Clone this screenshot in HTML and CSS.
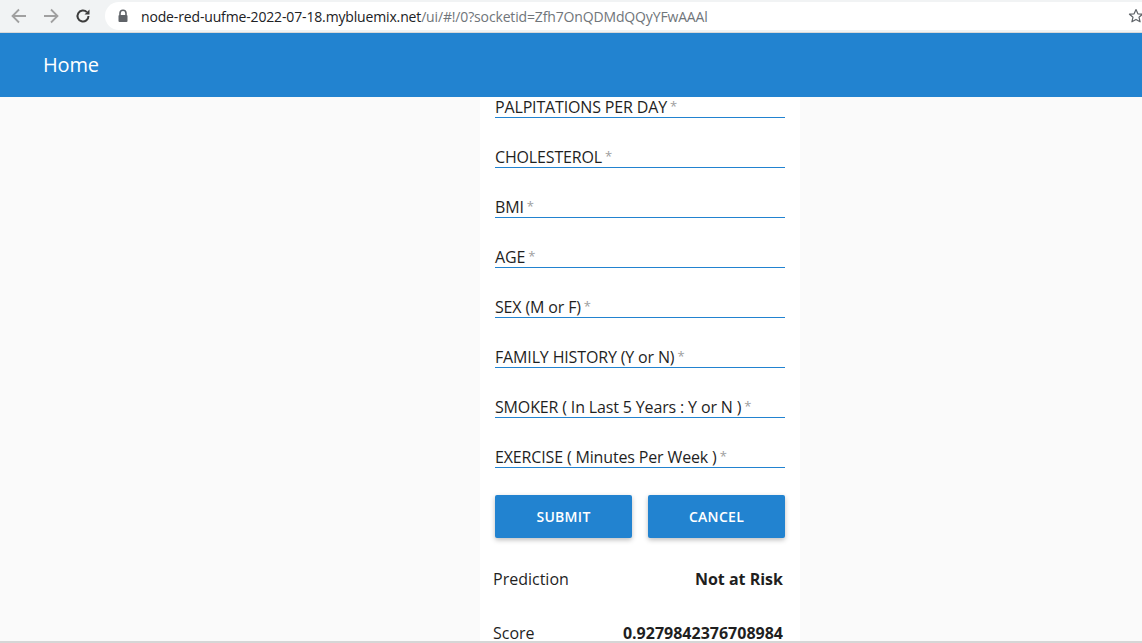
FILE: index.html
```html
<!DOCTYPE html>
<html>
<head>
<meta charset="utf-8">
<link rel="stylesheet" href="styles.css">
</head>
<body>
<div class="chrome">
  <div class="nav">
    <svg class="ico" width="20" height="20" viewBox="0 0 20 20"><path d="M17 10H4M10 3.5L3.5 10l6.5 6.5" fill="none" stroke="#a0a0a0" stroke-width="1.8"/></svg>
    <svg class="ico" width="20" height="20" viewBox="0 0 20 20"><path d="M3 10h13M10 3.5l6.5 6.5-6.5 6.5" fill="none" stroke="#a0a0a0" stroke-width="1.8"/></svg>
    <svg class="ico" width="20" height="20" viewBox="0 0 20 20"><path d="M15.5 10a5.5 5.5 0 1 1-1.6-3.9" fill="none" stroke="#3c3c3c" stroke-width="2"/><path d="M16.5 3.5v5h-5z" fill="#3c3c3c"/></svg>
  </div>
  <div class="omnibox">
    <svg class="lock" width="12" height="14" viewBox="0 0 12 14"><path d="M3 6V4.2a3 3 0 0 1 6 0V6" fill="none" stroke="#5f6368" stroke-width="1.6"/><rect x="1.5" y="6" width="9" height="7" rx="1" fill="#5f6368"/></svg>
    <span class="host">node-red-uufme-2022-07-18.mybluemix.net</span><span class="path">/ui/#!/0?socketid=Zfh7OnQDMdQQyYFwAAAl</span>
    <svg class="star" width="16" height="16" viewBox="0 0 16 16"><path d="M8 1.5l1.9 4.3 4.6.4-3.5 3 1.1 4.6L8 11.4l-4.1 2.4 1.1-4.6-3.5-3 4.6-.4z" fill="none" stroke="#5f6368" stroke-width="1.2" stroke-linejoin="round"/></svg>
  </div>
</div>
<header class="topbar"><span class="title">Home</span></header>
<main class="main">
  <section class="card">
    <div class="field first"><span class="label">PALPITATIONS PER DAY<span class="req">*</span></span></div>
    <div class="field"><span class="label">CHOLESTEROL<span class="req">*</span></span></div>
    <div class="field"><span class="label">BMI<span class="req">*</span></span></div>
    <div class="field"><span class="label">AGE<span class="req">*</span></span></div>
    <div class="field"><span class="label">SEX (M or F)<span class="req">*</span></span></div>
    <div class="field"><span class="label">FAMILY HISTORY (Y or N)<span class="req">*</span></span></div>
    <div class="field"><span class="label">SMOKER ( In Last 5 Years : Y or N )<span class="req">*</span></span></div>
    <div class="field"><span class="label">EXERCISE ( Minutes Per Week )<span class="req">*</span></span></div>
    <div class="buttons">
      <button class="btn">SUBMIT</button>
      <button class="btn">CANCEL</button>
    </div>
    <div class="row pred"><span>Prediction</span><span class="val">Not at Risk</span></div>
    <div class="row"><span>Score</span><span class="val">0.9279842376708984</span></div>
  </section>
</main>
</body>
</html>
```
FILE: styles.css
```css
html, body {
  margin: 0;
  padding: 0;
  height: 643px;
  overflow: hidden;
}
body {
  font-family: "Open Sans", "Noto Sans", sans-serif;
  background: #fafafa;
  display: flex;
  flex-direction: column;
  border-bottom: 2px solid #d6d6d6;
  box-sizing: border-box;
}
.chrome {
  height: 32px;
  flex: none;
  background: #f1f3f4;
  border-bottom: 1px solid #d9d9d9;
  display: flex;
  align-items: center;
}
.nav {
  display: flex;
  gap: 12px;
  padding-left: 9px;
  width: 96px;
  flex: none;
}
.ico { display: block; }
.omnibox {
  flex: 1;
  height: 28px;
  background: #fff;
  border-radius: 14px 0 0 14px;
  display: flex;
  align-items: center;
  padding-left: 12px;
  font-size: 14px;
  letter-spacing: -0.15px;
}
.lock { margin-right: 12px; }
.host { color: #202124; }
.path { color: #70757a; }
.star { margin-left: auto; margin-right: -2px; }
.topbar {
  height: 64px;
  flex: none;
  background: #2283d0;
  display: flex;
  align-items: center;
  padding-left: 43px;
}
.title {
  color: #fff;
  font-size: 20px;
  letter-spacing: -0.2px;
  margin-top: -1px;
}
.main {
  flex: 1;
  display: flex;
  padding-left: 480px;
  overflow: hidden;
  min-height: 0;
}
.card {
  width: 320px;
  background: #fff;
  display: flex;
  flex-direction: column;
  padding: 0 15px 0 15px;
  box-sizing: border-box;
}
.field {
  height: 50px;
  flex: none;
  display: flex;
  align-items: flex-end;
  border-bottom: 1px solid #2283d0;
  box-sizing: border-box;
}
.field.first { height: 21px; }
.label {
  font-size: 16px;
  color: #1f1f1f;
  line-height: 20px;
  letter-spacing: -0.15px;
}
.req {
  color: #9e9e9e;
  font-size: 13px;
  margin-left: 3px;
  vertical-align: 2px;
}
.buttons {
  display: flex;
  flex: none;
  gap: 16px;
  margin-top: 27px;
}
.btn {
  flex: 1;
  height: 43px;
  border: none;
  border-radius: 2px;
  background: #2283d0;
  color: #fff;
  font-family: inherit;
  font-size: 14px;
  font-weight: 600;
  letter-spacing: 0.3px;
  box-shadow: 0 2px 5px rgba(0, 0, 0, 0.26);
}
.row {
  display: flex;
  flex: none;
  justify-content: space-between;
  font-size: 16px;
  line-height: 16px;
  color: #1f1f1f;
  margin: 0 2px 0 -2px;
  height: 54px;
  align-items: flex-end;
}
.row.pred { height: 49px; }
.val { font-weight: 700; }
```
